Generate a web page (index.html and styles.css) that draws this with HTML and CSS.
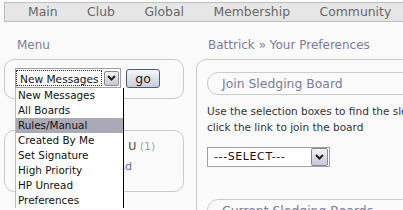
FILE: index.html
```html
<!DOCTYPE html>
<html>
<head>
<meta charset="utf-8">
<link rel="stylesheet" href="styles.css">
</head>
<body>
<nav class="topnav">
  <span>Main</span><span>Club</span><span>Global</span><span>Membership</span><span>Community</span>
</nav>
<div class="page">
  <aside class="left">
    <h2 class="col-title">Menu</h2>
    <div class="box menu-box">
      <div class="select menu-select">
        <span class="sel-text focus">New Messages</span>
        <span class="sel-arrow"><svg width="9" height="6" viewBox="0 0 9 6"><polyline points="1,1 4.5,4.5 8,1" fill="none" stroke="#222" stroke-width="2"/></svg></span>
        <ul class="dropdown">
          <li>New Messages</li>
          <li>All Boards</li>
          <li class="hl">Rules/Manual</li>
          <li>Created By Me</li>
          <li>Set Signature</li>
          <li>High Priority</li>
          <li>HP Unread</li>
          <li>Preferences</li>
        </ul>
      </div>
      <button class="go">go</button>
    </div>
    <div class="box forum-box">
      <div class="forum-line">Battrick Forum - <span class="u">U</span> <span class="count">(1)</span></div>
      <div class="forum-link">Show all unread</div>
    </div>
  </aside>
  <main class="right">
    <h2 class="col-title">Battrick » Your Preferences</h2>
    <div class="box main-box">
      <div class="sub-head">Join Sledging Board</div>
      <p class="intro">Use the selection boxes to find the sledging board you wish to join and then<br>click the link to join the board</p>
      <div class="select wide-select">
        <span class="sel-text">---SELECT---</span>
        <span class="sel-arrow"><svg width="9" height="6" viewBox="0 0 9 6"><polyline points="1,1 4.5,4.5 8,1" fill="none" stroke="#222" stroke-width="2"/></svg></span>
      </div>
      <div class="sub-head current">Current Sledging Boards</div>
    </div>
  </main>
</div>
</body>
</html>
```
FILE: styles.css
```css
html, body {
  margin: 0;
  padding: 0;
}
body {
  background: #fafafa;
  font-family: "DejaVu Sans", sans-serif;
  width: 403px;
  height: 210px;
  overflow: hidden;
}
.topnav {
  margin: 2px 0 0 4px;
  width: 900px;
  height: 20px;
  box-sizing: border-box;
  border: 1px solid #bdbdbd;
  border-right: none;
  background: #e6e6e6;
  display: flex;
  gap: 29.5px;
  padding-left: 23px;
  font-size: 12.4px;
  line-height: 18px;
  color: #666;
}
.page {
  display: flex;
  gap: 12px;
  padding-left: 4px;
  width: 900px;
}
.left {
  width: 180px;
  flex: none;
}
.right {
  flex: 1;
}
.col-title {
  margin: 15px 0 6px 13px;
  font-size: 12px;
  line-height: 16px;
  font-weight: normal;
  color: #7c7ca0;
}
.right .col-title {
  margin-left: 12px;
}
.box {
  border: 1px solid #c9c9c9;
  border-radius: 10px;
  box-sizing: border-box;
}
.menu-box {
  height: 40px;
  padding: 8px 0 0 10px;
  display: flex;
  gap: 5px;
  align-items: flex-start;
}
.select {
  position: relative;
  height: 20px;
  box-sizing: border-box;
  border: 1px solid #a0a0a0;
  background: #fff;
  display: flex;
  align-items: center;
  justify-content: space-between;
}
.menu-select {
  width: 106px;
  z-index: 2;
}
.sel-text {
  font-size: 10.4px;
  color: #111;
  line-height: 14px;
  white-space: nowrap;
}
.menu-select .sel-text {
  align-self: stretch;
  margin: 1px 2px 1px 0;
  padding: 1px 0 0 3px;
  width: 86px;
  flex: none;
  overflow: hidden;
  border: 1px dotted #333;
  box-sizing: border-box;
  font-size: 10.6px;
}
.sel-arrow {
  width: 15px;
  height: 15px;
  flex: none;
  box-sizing: border-box;
  border: 1px solid #8a8a8a;
  border-radius: 2px;
  background: linear-gradient(#f2f2f6, #c6c8d4);
  margin-right: 1px;
  display: flex;
  align-items: center;
  justify-content: center;
}
.dropdown {
  position: absolute;
  top: 19px;
  left: -1px;
  width: 109px;
  margin: 0;
  padding: 0;
  list-style: none;
  background: #fff;
  border-left: 1px solid #bbb;
  border-right: 1px solid #000;
  box-sizing: border-box;
}
.dropdown li {
  height: 15px;
  line-height: 15px;
  padding-left: 2px;
  font-size: 10.4px;
  color: #111;
  white-space: nowrap;
}
.dropdown li.hl {
  background: #aaaab7;
}
.go {
  margin-top: 1px;
  width: 34px;
  height: 19px;
  padding: 0;
  border: 1px solid #4c5c78;
  border-radius: 3px;
  background: linear-gradient(#f6f6fa, #c9ccd8);
  font-family: "DejaVu Sans", sans-serif;
  font-size: 12.5px;
  line-height: 16px;
  color: #222;
}
.forum-box {
  margin-top: 31px;
  height: 62px;
  padding-top: 6px;
  font-size: 11px;
  line-height: 20px;
  white-space: nowrap;
}
.forum-line {
  padding-left: 31px;
  color: #666;
}
.forum-line .u {
  color: #4a4020;
}
.forum-line .count {
  color: #a0a0c8;
}
.forum-link {
  width: 127px;
  text-align: right;
  color: #6868b0;
}
.main-box {
  height: 200px;
  padding: 12px 10px 0 10px;
}
.sub-head {
  height: 23px;
  box-sizing: border-box;
  border: 1px solid #cccccc;
  border-radius: 11px;
  padding-left: 14px;
  line-height: 21px;
  font-size: 12.4px;
  color: #7a7a9a;
}
.intro {
  margin: 8px 0 0;
  font-size: 10.5px;
  line-height: 16px;
  color: #333340;
  white-space: nowrap;
}
.wide-select {
  margin-top: 12px;
  width: 123px;
  padding-left: 6px;
}
.wide-select .sel-text {
  font-size: 11px;
  letter-spacing: 0.6px;
}
.wide-select .sel-arrow {
  width: 17px;
  height: 18px;
  margin-right: 1px;
}
.current {
  margin-top: 32px;
}
```
